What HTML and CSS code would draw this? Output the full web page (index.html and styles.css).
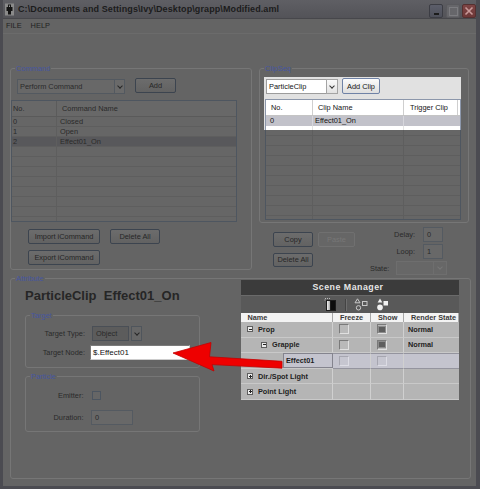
FILE: index.html
```html
<!DOCTYPE html>
<html>
<head>
<meta charset="utf-8">
<title>Modified.aml</title>
<link rel="stylesheet" href="styles.css">
</head>
<body>
<div class="window">
  <div class="titlebar">
    <svg class="app-icon" width="9" height="13" viewBox="0 0 9 13">
      <rect x="0" y="0.5" width="9" height="12" fill="#8a8a8a"/>
      <path d="M3 1.5h3v2.5h1.5v4H6v3.5H3V8H1.5V4H3z" fill="#141414"/>
      <path d="M4 2.5h1v1.5H4z" fill="#9a9a9a"/>
    </svg>
    <span class="title">C:\Documents and Settings\Ivy\Desktop\grapp\Modified.aml</span>
    <div class="wbtns">
      <span class="wbtn wbtn-min"></span>
      <span class="wbtn wbtn-max"></span>
      <span class="wbtn wbtn-close">
        <svg width="12" height="12" viewBox="0 0 12 12"><path d="M2.5 2.5l7 7M9.5 2.5l-7 7" stroke="#c89a9a" stroke-width="1.6"/></svg>
      </span>
    </div>
  </div>
  <div class="menubar"><span>FILE</span><span>HELP</span></div>

  <div class="main">
    <div class="top">
      <div class="group command">
        <div class="legend">Command</div>
        <div class="cmd-bar">
          <div class="combo combo-cmd"><span class="combo-text">Perform Command</span><span class="combo-arrow"></span></div>
          <button class="btn btn-add">Add</button>
        </div>
        <div class="tbl cmd-tbl">
          <div class="cmd-head"><span>No.</span><span>Command Name</span></div>
          <div class="cmd-row"><span>0</span><span>Closed</span></div>
          <div class="cmd-row"><span>1</span><span>Open</span></div>
          <div class="cmd-row is-selected"><span>2</span><span>Effect01_On</span></div>
          <div class="cmd-filler"></div>
        </div>
        <div class="cmd-actions">
          <div class="btn-line">
            <button class="btn btn-import">Import iCommand</button>
            <button class="btn btn-delete">Delete All</button>
          </div>
          <div class="btn-line">
            <button class="btn btn-import">Export iCommand</button>
          </div>
        </div>
      </div>

      <div class="right-col">
        <div class="group clipseq">
          <div class="legend">ClipSeq</div>
          <div class="spot">
            <div class="clip-bar">
              <div class="combo combo-clip"><span class="combo-text">ParticleClip</span><span class="combo-arrow"></span></div>
              <button class="btn-lit">Add Clip</button>
            </div>
            <div class="clip-tbl">
              <div class="clip-head"><span>No.</span><span>Clip Name</span><span>Trigger Clip</span></div>
              <div class="clip-row"><span>0</span><span>Effect01_On</span><span></span></div>
              <div class="clip-gap"><span></span><span></span><span></span></div>
            </div>
          </div>
          <div class="clip-rest"></div>
        </div>

        <div class="clip-controls">
          <div class="clip-buttons">
            <div class="btn-line">
              <button class="btn btn-copy">Copy</button>
              <button class="btn btn-paste" disabled>Paste</button>
            </div>
            <button class="btn btn-copy btn-delete2">Delete All</button>
          </div>
          <div class="clip-form">
            <div class="form-row"><span class="form-label">Delay:</span><span class="field field-num">0</span></div>
            <div class="form-row"><span class="form-label">Loop:</span><span class="field field-num">1</span></div>
            <div class="form-row state-row"><span class="form-label">State:</span><span class="combo combo-state"><span class="combo-text"></span><span class="combo-arrow"></span></span></div>
          </div>
        </div>
      </div>
    </div>

    <div class="group attribute">
      <div class="legend">Attribute</div>
      <div class="attr-title">ParticleClip&nbsp;&nbsp;Effect01_On</div>

      <div class="group sub target">
        <div class="legend">Target</div>
        <div class="prop-row">
          <span class="prop-label">Target Type:</span>
          <span class="obj-combo"><span class="obj-value">Object</span><span class="obj-arrow"></span></span>
        </div>
        <div class="prop-row row-node">
          <span class="prop-label">Target Node:</span>
          <span class="field field-node">$.Effect01</span>
        </div>
      </div>

      <div class="group sub particle">
        <div class="legend">Particle</div>
        <div class="prop-row">
          <span class="prop-label short">Emitter:</span>
          <span class="check"></span>
        </div>
        <div class="prop-row row-duration">
          <span class="prop-label short">Duration:</span>
          <span class="field field-duration">0</span>
        </div>
      </div>
    </div>
  </div>

  <!-- floating Scene Manager window -->
  <div class="scene">
    <div class="scene-title">Scene Manager</div>
    <div class="scene-tools">
      <svg class="tool-contrast" width="12" height="13" viewBox="0 0 12 13">
        <path d="M1 0.5h1M3 0.5h1M5 0.5h1M0.5 2h1" stroke="#bdbdbd" stroke-width="1"/>
        <defs><linearGradient id="lg" x1="0" x2="1"><stop offset="0" stop-color="#ffffff"/><stop offset="1" stop-color="#9a9a9a"/></linearGradient></defs>
        <rect x="2.5" y="2.5" width="4" height="10" fill="url(#lg)" stroke="#1c1c1c"/>
        <rect x="6.5" y="2.5" width="5" height="10" fill="#0c0c0c" stroke="#1c1c1c"/>
      </svg>
      <span class="tool-sep"></span>
      <svg class="tool-outline" width="14" height="13" viewBox="0 0 14 13">
        <path d="M3.5 0.8L6 4.8H1z" fill="none" stroke="#c9c9c9"/>
        <rect x="8.5" y="3.5" width="4.5" height="4" fill="none" stroke="#c9c9c9"/>
        <circle cx="4.5" cy="9.8" r="2.2" fill="none" stroke="#c9c9c9"/>
      </svg>
      <svg class="tool-filled" width="14" height="13" viewBox="0 0 14 13">
        <path d="M5 0.5L7.4 4.4H2.6z" fill="#f2f2f2"/>
        <rect x="8.5" y="3" width="4.5" height="4.5" fill="#f2f2f2"/>
        <circle cx="5" cy="9.4" r="2.8" fill="#f2f2f2"/>
      </svg>
    </div>
    <div class="scene-grid">
      <div class="sh">Name</div><div class="sh">Freeze</div><div class="sh">Show</div><div class="sh">Render State</div>

      <div class="sc sc-name"><span class="tree-box minus"></span>Prop</div>
      <div class="sc"><span class="cb"></span></div>
      <div class="sc"><span class="cb on"></span></div>
      <div class="sc sc-state">Normal</div>

      <div class="sc sc-name lvl2"><span class="tree-box minus"></span>Grapple</div>
      <div class="sc"><span class="cb"></span></div>
      <div class="sc"><span class="cb on"></span></div>
      <div class="sc sc-state">Normal</div>

      <div class="sc sc-name sc-pick"><span class="pick-box">Effect01</span></div>
      <div class="sc sc-sel"><span class="cb faint"></span></div>
      <div class="sc sc-sel"><span class="cb faint"></span></div>
      <div class="sc sc-sel"></div>

      <div class="sc sc-name"><span class="tree-box plus"></span>Dir./Spot Light</div>
      <div class="sc"></div>
      <div class="sc"></div>
      <div class="sc"></div>

      <div class="sc sc-name"><span class="tree-box plus"></span>Point Light</div>
      <div class="sc"></div>
      <div class="sc"></div>
      <div class="sc"></div>
    </div>
  </div>

  <!-- pointer from the scene node to the Target Node field -->
  <svg class="pointer" width="118" height="36" viewBox="0 0 118 36">
    <path d="M3 15L41 4.5L39.5 18.8L112 23.3L112 30.2L42 26.6L44 33Z" fill="#ee0000" stroke="#c40000" stroke-width="0.8" stroke-linejoin="round"/>
  </svg>
</div>
</body>
</html>
```

FILE: styles.css
```css
* { box-sizing: border-box; }

html, body {
  margin: 0;
  padding: 0;
}

body {
  background: #4b4b51;
  font-family: "Liberation Sans", Arial, sans-serif;
  font-size: 7.4px;
  color: #2a2a2a;
}

button {
  font: inherit;
  margin: 0;
  padding: 0;
}

.window {
  position: relative;
  width: 480px;
  height: 489px;
  background: #646464;
  border-left: 3px solid #4b4b51;
  border-right: 4px solid #4b4b51;
  border-bottom: 3px solid #4b4b51;
  display: flex;
  flex-direction: column;
  overflow: hidden;
}

/* ---------- window chrome ---------- */
.titlebar {
  height: 19px;
  flex: none;
  display: flex;
  align-items: center;
  padding-left: 2px;
  background: linear-gradient(#5f5f64, #535358);
  border-bottom: 1px solid #47474b;
}

.app-icon { flex: none; margin-top: 1px; }

.title {
  margin-left: 4px;
  font-weight: bold;
  font-size: 9px;
  letter-spacing: 0.1px;
  color: #1c1c1c;
  white-space: nowrap;
}

.wbtns {
  margin-left: auto;
  display: flex;
  align-self: flex-start;
  margin-top: 4px;
}

.wbtn {
  width: 14px;
  height: 14px;
  border-radius: 2px;
  border: 1px solid #3c3d44;
  position: relative;
  display: flex;
  align-items: center;
  justify-content: center;
}

.wbtn-min {
  background: linear-gradient(#5c5e6a, #4e505a);
}
.wbtn-min::after {
  content: "";
  position: absolute;
  left: 4px;
  top: 8px;
  width: 5px;
  height: 2px;
  background: #1c1c1c;
}

.wbtn-max {
  margin-left: 3px;
  background: #66666a;
  border-color: #5a5a5e;
}
.wbtn-max::after {
  content: "";
  width: 7px;
  height: 7px;
  border: 1px solid #7c7c80;
}

.wbtn-close {
  margin-left: 2px;
  background: linear-gradient(#7e4444, #6e3838);
  border-color: #553030;
}

.menubar {
  height: 15px;
  flex: none;
  display: flex;
  align-items: center;
  gap: 9px;
  padding: 0 0 1px 3px;
  border-bottom: 1px solid #6b6b6b;
  color: #222;
}

/* ---------- layout ---------- */
.main {
  flex: 1;
  padding: 34px 5px 0 7px;
}

.top {
  display: flex;
  align-items: flex-start;
  gap: 7px;
}

.group {
  border: 1px solid #767676;
  border-radius: 3px;
}

.legend {
  width: max-content;
  height: 9px;
  line-height: 9px;
  margin: -5px 0 0 4px;
  padding: 0 1px;
  background: #646464;
  color: #4656a0;
}

/* ---------- widgets ---------- */
.combo {
  display: flex;
  height: 15px;
  border: 1px solid #535960;
  background: #686868;
}
.combo-text {
  flex: 1;
  padding-left: 2px;
  line-height: 13px;
  white-space: nowrap;
  overflow: hidden;
}
.combo-arrow {
  width: 10px;
  flex: none;
  border-left: 1px solid #535960;
  background: #6a6a6a;
  display: flex;
  align-items: center;
  justify-content: center;
}
.combo-arrow::after {
  content: "";
  width: 3px;
  height: 3px;
  border-right: 1.5px solid #262626;
  border-bottom: 1.5px solid #262626;
  transform: translateY(-1px) rotate(45deg);
}

.btn {
  height: 15px;
  border: 1px solid #3c444f;
  border-radius: 2px;
  background: linear-gradient(#6c6c6c, #626262);
  color: #262626;
  text-align: center;
}
.btn:disabled {
  border-color: #707070;
  background: #666;
  color: #777;
}

.btn-line {
  display: flex;
}

.field {
  display: block;
  height: 15px;
  border: 1px solid #545a61;
  background: #686868;
  padding-left: 3px;
  line-height: 13px;
}

/* ---------- Command group ---------- */
.command {
  width: 242px;
  padding-bottom: 4px;
}

.cmd-bar {
  display: flex;
  margin-top: 6px;
  padding-left: 6px;
}
.combo-cmd { width: 108px; }
.btn-add {
  width: 41px;
  margin-left: 10px;
  margin-top: -1px;
}

.tbl {
  border: 1px solid #4e5660;
  background: #666;
}

.cmd-tbl {
  width: 226px;
  margin-top: 6px;
}

.cmd-head {
  display: grid;
  grid-template-columns: 45px 1fr;
  height: 16px;
  background: #686868;
  border-bottom: 1px solid #5a5a5a;
  line-height: 15px;
}
.cmd-head span:first-child {
  border-right: 1px solid #5b5b5b;
  padding-left: 1px;
}
.cmd-head span:last-child { padding-left: 5px; }

.cmd-row {
  display: grid;
  grid-template-columns: 45px 1fr;
  height: 10px;
  line-height: 9px;
  border-bottom: 1px solid #5e5e5e;
}
.cmd-row span:first-child {
  border-right: 1px solid #5e5e5e;
  padding-left: 1px;
}
.cmd-row span:last-child { padding-left: 3px; }
.cmd-row.is-selected { background: #58585b; }

.cmd-filler {
  height: 74px;
  background:
    linear-gradient(to right, transparent 44px, #5e5e5e 44px 45px, transparent 45px),
    repeating-linear-gradient(to bottom, transparent 0 9px, #5e5e5e 9px 10px);
}

.cmd-actions {
  margin-top: 7px;
  padding-left: 17px;
  display: flex;
  flex-direction: column;
  gap: 6px;
}
.btn-import { width: 72px; }
.btn-delete { width: 50px; margin-left: 10px; }

/* ---------- ClipSeq group ---------- */
.right-col {
  width: 210px;
}

.clipseq {
  padding-bottom: 2px;
}

.spot {
  width: 197px;
  height: 53px;
  margin: 4px 0 0 4px;
  background: #e1e1e1;
  color: #141414;
}

.clip-bar {
  display: flex;
  height: 22px;
  padding: 2px 0 0 2px;
}
.combo-clip {
  width: 72px;
  border-color: #9c9c9c;
  background: #fff;
}
.combo-clip .combo-arrow {
  border: 1px solid #a4a4a4;
  margin: -1px -1px -1px 0;
  width: 12px;
  background: linear-gradient(#fafafa, #e2e2e2);
}
.combo-clip .combo-arrow::after { border-color: #333; }

.btn-lit {
  width: 38px;
  height: 16px;
  margin: -1px 0 0 4px;
  border: 1px solid #6f82a6;
  border-radius: 2px;
  background: linear-gradient(#fbfbfb, #dedede);
  color: #141414;
}

.clip-tbl {
  width: 196px;
  margin-left: 1px;
  border: 1px solid #8c97ab;
  border-bottom: 0;
  background: #fff;
}

.clip-head,
.clip-row,
.clip-gap {
  display: grid;
  grid-template-columns: 47px 91px 1fr;
}

.clip-head {
  height: 16px;
  line-height: 15px;
  border-bottom: 1px solid #c4c4c4;
}
.clip-head span { border-right: 1px solid #cfcfcf; }
.clip-head span:nth-child(1) { padding-left: 5px; }
.clip-head span:nth-child(2) { padding-left: 5px; }
.clip-head span:nth-child(3) { padding-left: 6px; margin-right: 2px; }

.clip-row {
  height: 10px;
  line-height: 10px;
  background: #c2c2ca;
}
.clip-row span:nth-child(1) { padding-left: 4px; border-right: 1px solid #d6d6dc; }
.clip-row span:nth-child(2) { padding-left: 2px; border-right: 1px solid #d6d6dc; }

.clip-gap {
  height: 4px;
}
.clip-gap span:nth-child(-n+2) { border-right: 1px solid #e4e4e4; }

.clip-rest {
  width: 196px;
  height: 90px;
  margin-left: 5px;
  border: 1px solid #4e5660;
  border-top: 0;
  background:
    linear-gradient(to right, transparent 46px, #5e5e5e 46px 47px, transparent 47px 137px, #5e5e5e 137px 138px, transparent 138px),
    repeating-linear-gradient(to bottom, transparent 0 5px, #5e5e5e 5px 6px, transparent 6px 10px);
  background-color: #666;
}

.clip-controls {
  display: flex;
  margin-top: 4px;
}

.clip-buttons {
  margin: 5px 0 0 14px;
  display: flex;
  flex-direction: column;
  gap: 6px;
}
.btn-copy { width: 40px; height: 14.5px; }
.btn-paste { width: 37px; height: 14.5px; margin-left: 5px; }

.clip-form {
  width: 78px;
  margin-left: 15px;
  display: flex;
  flex-direction: column;
  gap: 2px;
}

.form-row {
  height: 15px;
  display: flex;
  align-items: center;
  justify-content: flex-end;
  padding-right: 5px;
}
.form-label { margin-right: 8px; }
.field-num { width: 20px; }

.state-row {
  height: 14px;
  justify-content: flex-start;
  padding-right: 0;
}
.state-row .form-label { margin-right: 7px; }
.combo-state {
  width: 51px;
  height: 14px;
  border-color: #6e6e6e;
  background: #676767;
}
.combo-state .combo-arrow {
  width: 13px;
  border-color: #6e6e6e;
  background: #676767;
}
.combo-state .combo-arrow::after { border-color: #777; }

/* ---------- Attribute group ---------- */
.attribute {
  height: 201px;
  margin-top: 3px;
}

.attr-title {
  margin: 5px 0 0 14px;
  height: 15px;
  line-height: 15px;
  font-size: 13px;
  font-weight: bold;
  color: #262626;
}

.sub {
  width: 175px;
  margin-left: 14px;
}
.target {
  margin-top: 12px;
  padding-bottom: 7px;
}
.particle {
  margin-top: 8px;
  padding-bottom: 6px;
}

.prop-row {
  display: flex;
  align-items: center;
  height: 15px;
  margin-top: 6px;
}
.row-node { margin-top: 4px; }
.particle .prop-row { margin-top: 7px; }

.prop-label {
  width: 59px;
  text-align: right;
  flex: none;
}
.prop-label.short { width: 57.5px; }

.obj-combo {
  display: flex;
  margin-left: 7px;
  height: 15px;
}
.obj-value {
  width: 37px;
  border: 1px solid #4a4f56;
  background: #5c5c5c;
  padding-left: 3px;
  line-height: 13px;
}
.obj-arrow {
  width: 11px;
  margin-left: 2px;
  border: 1px solid #4f555c;
  background: #676767;
  display: flex;
  align-items: center;
  justify-content: center;
}
.obj-arrow::after {
  content: "";
  width: 3px;
  height: 3px;
  border-right: 1.5px solid #262626;
  border-bottom: 1.5px solid #262626;
  transform: translateY(-1px) rotate(45deg);
}

.field-node {
  width: 100px;
  margin-left: 5px;
  background: #fff;
  border-color: #7b7b7b #cdcdcd #cdcdcd #7b7b7b;
  color: #111;
  font-size: 8px;
  padding-left: 2px;
}

.check {
  width: 9px;
  height: 9px;
  margin-left: 8px;
  border: 1px solid #4c5560;
  background: #666;
}

.field-duration {
  width: 42px;
  margin-left: 7.5px;
}

/* ---------- Scene Manager ---------- */
.scene {
  position: absolute;
  left: 238px;
  top: 280px;
  width: 218px;
  background: #b5b5b5;
  color: #1e1e1e;
  font-weight: bold;
  font-size: 7.3px;
}

.scene-title {
  height: 15px;
  line-height: 15px;
  padding-right: 4px;
  text-align: center;
  background: #3b3b3b;
  color: #e6e6e6;
  font-size: 8.8px;
  letter-spacing: 0.5px;
}

.scene-tools {
  height: 18px;
  display: flex;
  align-items: center;
  padding-left: 83px;
  background: #595959;
  border-top: 1px solid #6a6a6a;
}
.tool-sep {
  width: 1px;
  height: 12px;
  margin-left: 9px;
  background: #444;
  box-shadow: 1px 0 0 #6e6e6e;
}
.tool-outline { margin-left: 8px; }
.tool-filled { margin-left: 7px; }

.scene-grid {
  display: grid;
  grid-template-columns: 92px 38px 33px 55px;
  grid-template-rows: 9px repeat(5, 15.6px);
}

.sh {
  background: #f3f3f3;
  color: #3a3a3a;
  line-height: 9px;
  border-right: 1px solid #a8a8a8;
  padding-left: 7px;
}
.sh:first-child { padding-left: 6.5px; }
.sh:last-child { border-right: 0; }

.sc {
  display: flex;
  align-items: center;
  border-right: 1px solid #d0d0d0;
  border-bottom: 1px solid #c9c9c9;
  padding-left: 6px;
  white-space: nowrap;
}
.sc:nth-child(4n) { border-right: 0; }
.sc-name { padding-left: 6px; }
.sc-name.lvl2 { padding-left: 20px; }
.sc-state { padding-left: 4px; }

.tree-box {
  width: 6px;
  height: 6px;
  margin-right: 5px;
  border: 1px solid #5e5e5e;
  background: #ececec;
  position: relative;
  flex: none;
}
.tree-box::before {
  content: "";
  position: absolute;
  left: 0.5px;
  right: 0.5px;
  top: 1.5px;
  height: 1px;
  background: #222;
}
.tree-box.plus::after {
  content: "";
  position: absolute;
  top: 0.5px;
  bottom: 0.5px;
  left: 1.5px;
  width: 1px;
  background: #222;
}

.sc-pick {
  padding-left: 42px;
  align-items: stretch;
}
.pick-box {
  flex: 1;
  display: flex;
  align-items: center;
  padding-left: 2px;
  margin-right: -1px;
  background: #c4c4ce;
  border: 1px solid #84848e;
}
.sc-sel {
  background: #c4c4ce;
  border-top: 1px solid #94949e;
  border-bottom-color: #94949e;
}

.cb {
  width: 10px;
  height: 10px;
  border: 1px solid;
  border-color: #7a7a7a #e0e0e0 #e0e0e0 #7a7a7a;
  background: #b9b9b9;
  display: flex;
  align-items: center;
  justify-content: center;
}
.cb.on::after {
  content: "";
  width: 6px;
  height: 5px;
  background: #5e5e5e;
  border: 1px solid #8c8c8c;
}
.cb.faint {
  border-color: #a6a6b0 #dcdce4 #dcdce4 #a6a6b0;
  background: #c6c6d0;
}

/* ---------- annotation arrow ---------- */
.pointer {
  position: absolute;
  left: 167px;
  top: 338px;
  pointer-events: none;
}
```
